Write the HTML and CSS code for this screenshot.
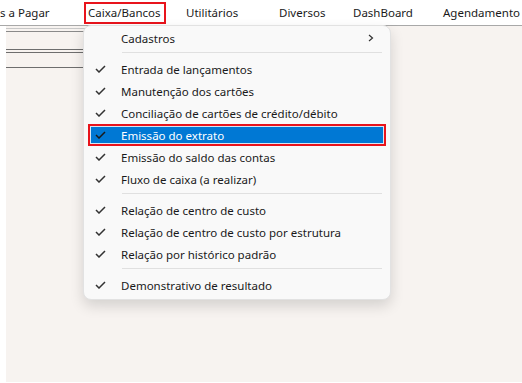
FILE: index.html
```html
<!DOCTYPE html>
<html>
<head>
  <meta charset="UTF-8">
  <title>Caixa/Bancos</title>
  <link rel="stylesheet" href="styles.css">
</head>
<body>
  <div class="menubar">
    <span class="bar-item">s a Pagar</span>
    <span class="bar-item"><span class="bar-label marked">Caixa/Bancos</span></span>
    <span class="bar-item">Utilitários</span>
    <span class="bar-item">Diversos</span>
    <span class="bar-item">DashBoard</span>
    <span class="bar-item">Agendamento</span>
  </div>
  <div class="workspace">
    <div class="side-strip"></div>
    <div class="canvas">
      <div class="form-lines">
        <div class="line-top"></div>
        <div class="line-pair"></div>
        <div class="line-single"></div>
      </div>
    </div>
  </div>

  <div class="dropdown">
    <div class="menu-item">
      <span class="check"></span>
      <span class="label">Cadastros</span>
      <svg class="arrow" width="6" height="8" viewBox="0 0 6 8"><path d="M1 1 L4.5 4 L1 7" fill="none" stroke="#333" stroke-width="1.2"/></svg>
    </div>
    <div class="separator"></div>
    <div class="menu-item">
      <svg class="check" width="11" height="8" viewBox="0 0 11 8"><path d="M1 4 L4 7 L10 1" fill="none" stroke="#333" stroke-width="1.5"/></svg>
      <span class="label">Entrada de lançamentos</span>
    </div>
    <div class="menu-item">
      <svg class="check" width="11" height="8" viewBox="0 0 11 8"><path d="M1 4 L4 7 L10 1" fill="none" stroke="#333" stroke-width="1.5"/></svg>
      <span class="label">Manutenção dos cartões</span>
    </div>
    <div class="menu-item">
      <svg class="check" width="11" height="8" viewBox="0 0 11 8"><path d="M1 4 L4 7 L10 1" fill="none" stroke="#333" stroke-width="1.5"/></svg>
      <span class="label">Conciliação de cartões de crédito/débito</span>
    </div>
    <div class="menu-item active">
      <svg class="check" width="11" height="8" viewBox="0 0 11 8"><path d="M1 4 L4 7 L10 1" fill="none" stroke="#1a1a1a" stroke-width="1.5"/></svg>
      <span class="label">Emissão do extrato</span>
    </div>
    <div class="menu-item">
      <svg class="check" width="11" height="8" viewBox="0 0 11 8"><path d="M1 4 L4 7 L10 1" fill="none" stroke="#333" stroke-width="1.5"/></svg>
      <span class="label">Emissão do saldo das contas</span>
    </div>
    <div class="menu-item">
      <svg class="check" width="11" height="8" viewBox="0 0 11 8"><path d="M1 4 L4 7 L10 1" fill="none" stroke="#333" stroke-width="1.5"/></svg>
      <span class="label">Fluxo de caixa (a realizar)</span>
    </div>
    <div class="separator"></div>
    <div class="menu-item">
      <svg class="check" width="11" height="8" viewBox="0 0 11 8"><path d="M1 4 L4 7 L10 1" fill="none" stroke="#333" stroke-width="1.5"/></svg>
      <span class="label">Relação de centro de custo</span>
    </div>
    <div class="menu-item">
      <svg class="check" width="11" height="8" viewBox="0 0 11 8"><path d="M1 4 L4 7 L10 1" fill="none" stroke="#333" stroke-width="1.5"/></svg>
      <span class="label">Relação de centro de custo por estrutura</span>
    </div>
    <div class="menu-item">
      <svg class="check" width="11" height="8" viewBox="0 0 11 8"><path d="M1 4 L4 7 L10 1" fill="none" stroke="#333" stroke-width="1.5"/></svg>
      <span class="label">Relação por histórico padrão</span>
    </div>
    <div class="separator"></div>
    <div class="menu-item">
      <svg class="check" width="11" height="8" viewBox="0 0 11 8"><path d="M1 4 L4 7 L10 1" fill="none" stroke="#333" stroke-width="1.5"/></svg>
      <span class="label">Demonstrativo de resultado</span>
    </div>
  </div>
</body>
</html>
```

FILE: styles.css
```css
body {
  margin: 0;
  width: 522px;
  height: 383px;
  overflow: hidden;
  background: #fff;
  font-family: "Noto Sans", "Open Sans", sans-serif;
  font-size: 11.5px;
  color: #1a1a1a;
}
.menubar {
  display: grid;
  grid-template-columns: 88px 98px 93px 74px 90px auto;
  align-items: center;
  height: 25px;
  border-bottom: 1px solid #a8a8a8;
  background: #fff;
  white-space: nowrap;
}
.bar-item {
  display: flex;
  align-items: center;
}
.bar-label.marked {
  margin-left: -4px;
  padding: 1px 3px 2px 2px;
  border: 2px solid #e8141c;
}
.workspace {
  display: flex;
  height: 357px;
}
.side-strip {
  width: 6px;
  background: #fff;
}
.canvas {
  flex: 1;
  background: #f7f3f0;
  margin-bottom: 1px;
}
.form-lines {
  width: 110px;
}
.line-top {
  height: 2px;
  margin-top: 2px;
  border-top: 1px solid #c8c8c8;
  border-bottom: 1px solid #8a8a8a;
}
.line-pair {
  height: 2px;
  margin-top: 17px;
  border-top: 1px solid #6e6e6e;
  border-bottom: 1px solid #6e6e6e;
}
.line-single {
  height: 0;
  margin-top: 14px;
  border-top: 1px solid #6e6e6e;
}
.dropdown {
  position: absolute;
  left: 83px;
  top: 25px;
  width: 306px;
  padding: 1px 0 3px 0;
  background: #f9f9f9;
  border: 1px solid #e2e2e2;
  border-radius: 8px;
  box-shadow: 0 6px 14px rgba(0, 0, 0, 0.14);
}
.menu-item {
  display: flex;
  align-items: center;
  height: 22px;
  margin: 0 4px;
  padding: 0 0 0 7px;
  white-space: nowrap;
}
.check {
  width: 11px;
  flex: none;
}
.label {
  margin-left: 15px;
  flex: 1;
}
.arrow {
  margin-right: 12px;
}
.menu-item.active {
  border: 2px solid #e8141c;
  height: 18px;
  padding-left: 5px;
  margin: 0 4px;
  background: #0078d4;
  box-shadow: inset 0 0 0 1px #d6e6f5;
}
.menu-item.active .label {
  color: #fff;
}
.separator {
  height: 1px;
  margin: 3px 8px 5px 38px;
  background: #e0e0e0;
}
```
